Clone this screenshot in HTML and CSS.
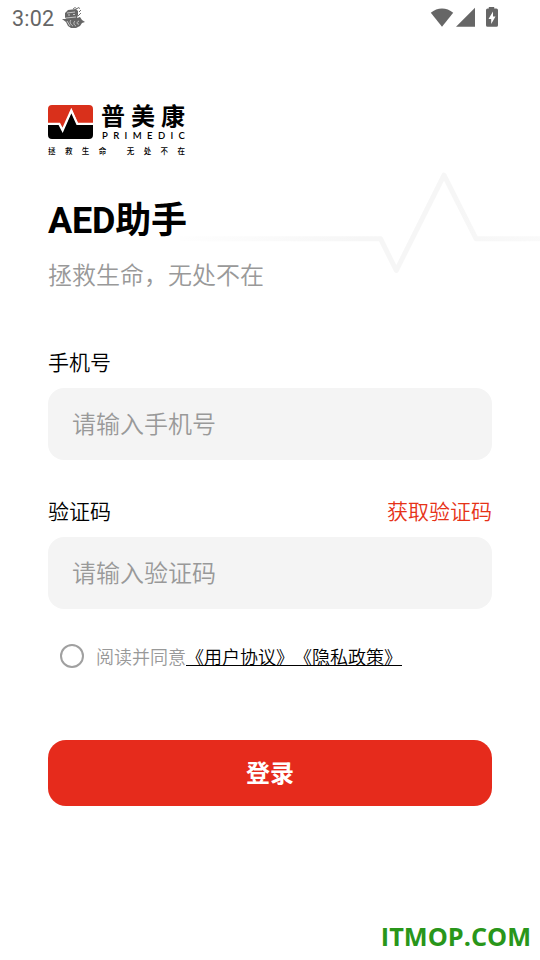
FILE: index.html
```html
<!DOCTYPE html>
<html lang="zh-CN">
<head>
<meta charset="utf-8">
<title>AED助手</title>
<link rel="stylesheet" href="styles.css">
</head>
<body>
<div class="screen">
  <header class="status">
    <span class="clock">3:02</span>
    <svg class="notice" width="24" height="24" viewBox="0 0 24 24">
      <path d="M3 6l3-3 8-1 2 2v4l-1 3 3-1 2 3 3 2-3 1-2 3-4 2H9l-3-2-2-4-4-3 4 0-1-2z" fill="#666"/>
      <path d="M11 2l2-1.500 2 1.500 1-1.500 2 1M17 5l2-2M16 9l3-3" fill="none" stroke="#777" stroke-width="1"/>
      <path d="M5 6l8-1M6 8h2M11 7.500h2M4 11l10-1M5 14l3 5M9 13c-2 2 0 5 2 6M13 14c-2 2-1 4 1 5M17 14c-3 1-2 4 0 3" fill="none" stroke="#ddd" stroke-width=".8"/>
    </svg>
    <svg class="radios" width="70" height="22" viewBox="0 0 70 22">
      <path d="M.8 5.800C7.400 0 16.600 0 23.200 5.800L12 19.800z" fill="#666"/>
      <path d="M26 19.800L45 .8v19z" fill="#666"/>
      <path d="M58.800 1.500V0h5.400v1.500h2.200q1.600 0 1.600 1.600v15.100q0 1.600-1.600 1.600h-8.800q-1.600 0-1.600-1.600V3.100q0-1.600 1.600-1.600z" fill="#666"/>
      <path d="M63 4.500l-4.500 7.500h2.700v5l4.300-7.500h-2.500z" fill="#fff"/>
    </svg>
  </header>
  <svg class="pulse" width="360" height="120" viewBox="0 0 360 120">
    <defs>
      <linearGradient id="fade" gradientUnits="userSpaceOnUse" x1="0" y1="0" x2="360" y2="0">
        <stop offset="0" stop-color="#f6f6f6" stop-opacity="0.1"/>
        <stop offset=".5" stop-color="#f6f6f6"/>
        <stop offset=".76" stop-color="#f6f6f6"/>
        <stop offset="1" stop-color="#f6f6f6" stop-opacity=".6"/>
      </linearGradient>
    </defs>
    <path d="M0 78.700H200.500L216.300 110.500 264 15.200 296 78.700H360" fill="none" stroke="url(#fade)" stroke-width="5" stroke-linejoin="round"/>
  </svg>
  <main class="content">
    <div class="brand">
      <div class="brand-top">
        <svg width="45" height="34" viewBox="0 0 45 34">
          <path d="M4 0H41Q45 0 45 4V18.500H30L23.500 4 14.500 24.500 11.500 18.500H0V4Q0 0 4 0z" fill="#d9301b"/>
          <path d="M0 19.500H11L14.500 26.500 23.500 7 29 19.500H45V30Q45 34 41 34H4Q0 34 0 30z" fill="#000"/>
          <path d="M0 18.900H11.300L14.600 25.300 23.300 5.500 29.300 18.900H45" fill="none" stroke="#fff" stroke-width="2.300"/>
        </svg>
        <div class="brand-words">
          <div class="brand-name">普美康</div>
          <div class="brand-latin"><span>P</span><span>R</span><span>I</span><span>M</span><span>E</span><span>D</span><span>I</span><span>C</span></div>
        </div>
      </div>
      <div class="brand-motto"><span>拯救生命</span><span>无处不在</span></div>
    </div>
    <h1 class="title">AED助手</h1>
    <p class="subtitle">拯救生命，无处不在</p>
    <form class="login">
      <div class="label"><span>手机号</span></div>
      <div class="field">请输入手机号</div>
      <div class="label second"><span>验证码</span><a class="get-code">获取验证码</a></div>
      <div class="field">请输入验证码</div>
      <div class="terms">
        <span class="radio"></span>
        <span>阅读并同意<a class="policy">《用户协议》《隐私政策》</a></span>
      </div>
      <div class="submit">登录</div>
    </form>
  </main>
  <footer class="mark">ITMOP.COM</footer>
</div>
</body>
</html>
```
FILE: styles.css
```css
* { box-sizing: border-box; }
body {
  margin: 0;
  background: #fff;
  color: #000;
  font-family: Roboto, "Noto Sans CJK SC", sans-serif;
  text-spacing-trim: space-all;
}
.screen {
  position: relative;
  width: 540px;
  height: 960px;
  overflow: hidden;
  display: flex;
  flex-direction: column;
}
.status {
  display: flex;
  height: 36px;
  padding: 7px 40px 0 12px;
  color: #666;
}
.clock {
  width: 50px;
  font-size: 21.5px;
  line-height: 24px;
  letter-spacing: .2px;
}
.radios { margin-left: auto; }
.pulse { position: absolute; left: 180px; top: 160px; }
.content { position: relative; padding: 69px 48px 0; flex: 1; }
.brand { width: 138px; height: 52px; }
.brand-top { display: flex; justify-content: space-between; height: 34px; }
.brand-words { width: 85px; }
.brand-name {
  font-size: 24px;
  font-weight: 700;
  line-height: 25px;
  letter-spacing: 6px;
  white-space: nowrap;
}
.brand-latin {
  display: flex;
  justify-content: space-between;
  padding: 0 1px;
  font: 600 9.500px/12px Lato, sans-serif;
}
.brand-motto {
  display: flex;
  justify-content: space-between;
  margin-top: 7px;
  font-size: 7.500px;
  font-weight: 500;
  line-height: 12px;
  letter-spacing: 9.400px;
  margin-right: -8.400px;
}
.title {
  margin: 38px 0 0;
  font-size: 36px;
  font-weight: 700;
  line-height: 52px;
  letter-spacing: -.2px;
}
.subtitle {
  margin: 11px 0 0;
  font-size: 24px;
  font-weight: 350;
  line-height: 36px;
  color: #999;
}
.label {
  display: flex;
  justify-content: space-between;
  margin-top: 54px;
  height: 40px;
  font-size: 21px;
  font-weight: 350;
  line-height: 31px;
}
.label.second { margin-top: 37px; }
.get-code { color: #e63217; }
.field {
  height: 72px;
  padding: 0 24px;
  border-radius: 16px;
  background: #f4f4f4;
  color: #999;
  font-size: 24px;
  font-weight: 350;
  line-height: 74px;
}
.terms {
  display: flex;
  align-items: center;
  height: 30px;
  margin-top: 34px;
  padding-left: 12px;
  gap: 12px;
  font-size: 18px;
  font-weight: 350;
  line-height: 28px;
  color: #999;
}
.radio {
  width: 24px;
  height: 24px;
  margin: -5px 0 0;
  border: 2px solid #a0a0a0;
  border-radius: 50%;
}
.policy { color: #000; text-decoration: underline; text-decoration-thickness: 1px; }
.submit {
  height: 66px;
  margin-top: 67px;
  border-radius: 18px;
  background: #e62b1c;
  color: #fff;
  font-size: 24px;
  font-weight: 700;
  line-height: 68px;
  text-align: center;
}
.mark {
  height: 46px;
  padding-right: 9px;
  color: #29961a;
  font: 700 25.3px/45px "Open Sans", sans-serif;
  text-align: right;
}
```
